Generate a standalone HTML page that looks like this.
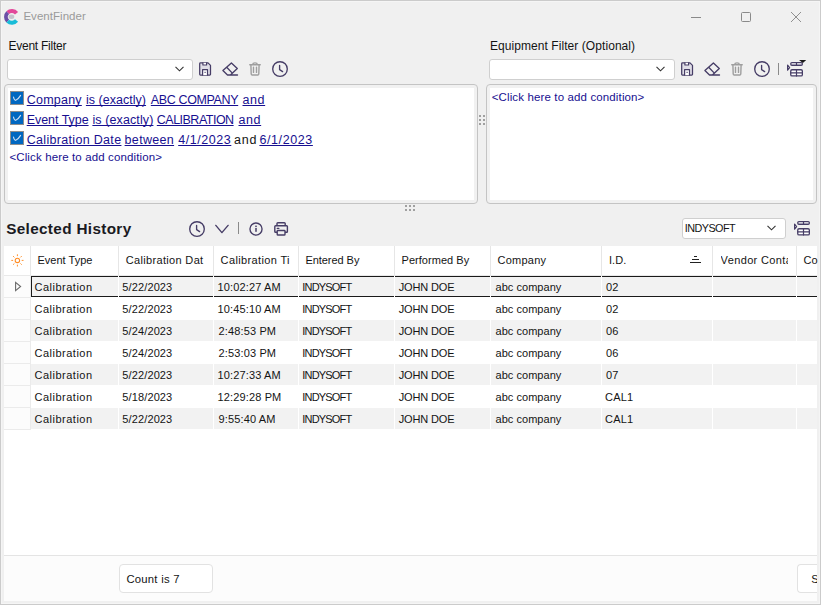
<!DOCTYPE html>
<html><head><meta charset="utf-8">
<style>
*{box-sizing:border-box;margin:0;padding:0}
html,body{width:821px;height:605px;overflow:hidden;background:#f0f0f0;font-family:"Liberation Sans",sans-serif;color:#1e1e1e}
.a{position:absolute}
.tx{position:absolute;white-space:nowrap;line-height:20px;font-family:"Liberation Sans",sans-serif}
.lk{text-decoration:underline;text-decoration-thickness:1px;text-decoration-skip-ink:none}
.win{position:absolute;left:0;top:0;width:821px;height:605px;border:1px solid #cbcbcb;box-shadow:inset 0 0 0 1px #f5f5f5}
.combo{position:absolute;background:#fff;border:1px solid #cfcfcf;border-radius:3px}
.box{position:absolute;border:1px solid #c4c4c4;border-radius:4px;background:#f1f1f1}
.box .in{position:absolute;left:3px;top:3px;right:3px;bottom:3px;background:#fff}
.chk{position:absolute;left:10px;width:14px;height:14px;background:#0067c0;border:1px solid #8d8d8d}
svg{position:absolute;overflow:visible}
.ic{fill:none;stroke:#463d66;stroke-width:1.35;stroke-linecap:round;stroke-linejoin:round}
.icg{fill:none;stroke:#9e9e9e;stroke-width:1.4;stroke-linecap:round;stroke-linejoin:round}
.grid{position:absolute;left:4px;top:246px;width:813px;height:309px;background:#fff;overflow:hidden}
.g{position:absolute}
</style></head>
<body>
<div class="win"></div>

<!-- logo -->
<svg style="left:0;top:0" width="30" height="30" viewBox="0 0 30 30">
  <path d="M16.55 13.27 A5.9 5.9 0 0 0 7.73 12.73" fill="none" stroke="#e2489a" stroke-width="3.9"/>
  <path d="M7.73 12.73 A5.9 5.9 0 0 0 7.73 21.07" fill="none" stroke="#6b4fa6" stroke-width="3.9"/>
  <path d="M7.73 21.07 A5.9 5.9 0 0 0 16.55 20.53" fill="none" stroke="#19bcd8" stroke-width="3.9"/>
  <ellipse cx="11.4" cy="16.8" rx="2.9" ry="2.2" fill="#c4c4cc"/>
</svg>
<!-- window controls -->
<div class="a" style="left:691px;top:17px;width:10px;height:1px;background:#8a8a8a"></div>
<div class="a" style="left:741px;top:12px;width:10px;height:10px;border:1px solid #8a8a8a;border-radius:1.5px"></div>
<svg style="left:790px;top:11px" width="12" height="12" viewBox="0 0 12 12"><path d="M1 1 L11 11 M11 1 L1 11" stroke="#8a8a8a" stroke-width="0.95"/></svg>

<!-- combos -->
<div class="combo" style="left:7px;top:59px;width:186px;height:21px"></div>
<svg style="left:175px;top:66px" width="9" height="6" viewBox="0 0 9 6"><path d="M0.5 0.8 L4.5 4.8 L8.5 0.8" fill="none" stroke="#333" stroke-width="1.1"/></svg>
<div class="combo" style="left:489px;top:59px;width:186px;height:21px"></div>
<svg style="left:656px;top:66px" width="9" height="6" viewBox="0 0 9 6"><path d="M0.5 0.8 L4.5 4.8 L8.5 0.8" fill="none" stroke="#333" stroke-width="1.1"/></svg>

<!-- toolbar icons: save, eraser, trash, clock (set 1 at x offset 0, set 2 at +482) -->
<svg style="left:198px;top:61px" width="15" height="16" viewBox="0 0 15 16">
<path class="ic" style="fill:#e0dee7;stroke-width:1.25" d="M2.5 1.9 H10 L12.5 4.4 V13.3 Q12.5 14.1 11.7 14.1 H2.5 Q1.7 14.1 1.7 13.3 V2.7 Q1.7 1.9 2.5 1.9 Z"/>
<path class="ic" style="fill:#fff;stroke-width:1.2" d="M4.6 14.1 V8.6 H9.5 V14.1"/>
<path class="ic" style="fill:#fff;stroke-width:1.2" d="M4.9 1.9 V4.0 H8.6 V1.9"/>
<rect x="6.5" y="10.8" width="1.2" height="1.1" fill="#463d66"/>
</svg>
<svg style="left:221px;top:61px" width="19" height="16" viewBox="0 0 19 16">
<path class="ic" d="M1.9 9.6 L10.4 1.9 L16.3 7.4 L9.4 14 H6.5 Z M5.7 6.2 L10.6 11.4 M6.5 14 H16.5"/>
</svg>
<svg style="left:248px;top:61px" width="15" height="16" viewBox="0 0 15 16">
<path class="icg" d="M1.75 3.75 H12.25 M4.6 3.6 Q4.8 1.9 7 1.9 Q9.2 1.9 9.4 3.6 M2.9 3.9 L3.2 13 Q3.3 13.95 4.2 13.95 H9.8 Q10.7 13.95 10.8 13 L11.1 3.9 M5.5 6.3 V11.4 M8.5 6.3 V11.4"/>
</svg>
<svg style="left:270px;top:58.900000000000006px" width="20" height="20" viewBox="0 0 20 20">
<circle class="ic" style="stroke-width:1.35" cx="10" cy="10" r="7.3"/>
<path class="ic" style="stroke-width:1.35" d="M9.6 6.4 V10.6 L12.6 12.6"/>
</svg>
<svg style="left:680px;top:61px" width="15" height="16" viewBox="0 0 15 16">
<path class="ic" style="fill:#e0dee7;stroke-width:1.25" d="M2.5 1.9 H10 L12.5 4.4 V13.3 Q12.5 14.1 11.7 14.1 H2.5 Q1.7 14.1 1.7 13.3 V2.7 Q1.7 1.9 2.5 1.9 Z"/>
<path class="ic" style="fill:#fff;stroke-width:1.2" d="M4.6 14.1 V8.6 H9.5 V14.1"/>
<path class="ic" style="fill:#fff;stroke-width:1.2" d="M4.9 1.9 V4.0 H8.6 V1.9"/>
<rect x="6.5" y="10.8" width="1.2" height="1.1" fill="#463d66"/>
</svg>
<svg style="left:703px;top:61px" width="19" height="16" viewBox="0 0 19 16">
<path class="ic" d="M1.9 9.6 L10.4 1.9 L16.3 7.4 L9.4 14 H6.5 Z M5.7 6.2 L10.6 11.4 M6.5 14 H16.5"/>
</svg>
<svg style="left:730px;top:61px" width="15" height="16" viewBox="0 0 15 16">
<path class="icg" d="M1.75 3.75 H12.25 M4.6 3.6 Q4.8 1.9 7 1.9 Q9.2 1.9 9.4 3.6 M2.9 3.9 L3.2 13 Q3.3 13.95 4.2 13.95 H9.8 Q10.7 13.95 10.8 13 L11.1 3.9 M5.5 6.3 V11.4 M8.5 6.3 V11.4"/>
</svg>
<svg style="left:752px;top:58.900000000000006px" width="20" height="20" viewBox="0 0 20 20">
<circle class="ic" style="stroke-width:1.35" cx="10" cy="10" r="7.3"/>
<path class="ic" style="stroke-width:1.35" d="M9.6 6.4 V10.6 L12.6 12.6"/>
</svg>
<div class="a" style="left:778px;top:63px;width:1px;height:12px;background:#8a8a8a"></div>
<svg style="left:786px;top:59px" width="22" height="19" viewBox="0 0 22 19">
<path class="ic" style="stroke-width:1.2" d="M1.6 6 L3.6 8.6 L1.6 11.2 Z"/>
<rect class="ic" style="stroke-width:1.3;fill:#fff" x="4.75" y="3.65" width="11.6" height="2.6" rx="1.2"/>
<path class="ic" style="stroke-width:1.2" d="M10.5 3.65 V6.25"/>
<rect class="ic" style="stroke-width:1.3;fill:#fff" x="4.75" y="10.75" width="11.6" height="6.2" rx="1.3"/>
<path class="ic" style="stroke-width:1.2" d="M10.5 10.75 V16.95 M4.75 13.85 H16.35"/>
<path d="M13 1 H20.2 L16.9 4 Z" fill="#1a1a1a"/>
</svg>

<div class="box" style="left:4px;top:84px;width:474px;height:120px"><div class="in"></div></div>
<div class="box" style="left:486px;top:84px;width:331px;height:120px"><div class="in"></div></div>

<div class="chk" style="top:91px"></div>
<div class="chk" style="top:111px"></div>
<div class="chk" style="top:131px"></div>
<svg style="left:10px;top:91px" width="14" height="54" viewBox="0 0 14 54">
  <path d="M3.5 6 Q4.3 9.6 5.8 9.3 Q8.2 8.4 10.6 4.4 M3.5 26 Q4.3 29.6 5.8 29.3 Q8.2 28.4 10.6 24.4 M3.5 46 Q4.3 49.6 5.8 49.3 Q8.2 48.4 10.6 44.4" fill="none" stroke="#c8dcf2" stroke-width="1.15" stroke-linecap="round"/>
</svg>

<!-- vertical splitter dots -->
<div class="a" style="left:479px;top:115px;width:2px;height:2px;background:#a0a0a0;box-shadow:4px 0 #a0a0a0,0 4px #a0a0a0,4px 4px #a0a0a0,0 8px #a0a0a0,4px 8px #a0a0a0"></div>
<!-- horizontal splitter dots -->
<div class="a" style="left:405px;top:205px;width:2px;height:2px;background:#a0a0a0;box-shadow:4px 0 #a0a0a0,8px 0 #a0a0a0,0 4px #a0a0a0,4px 4px #a0a0a0,8px 4px #a0a0a0"></div>

<svg style="left:187px;top:218.9px" width="20" height="20" viewBox="0 0 20 20">
<circle class="ic" style="stroke-width:1.35" cx="10" cy="10" r="7.3"/>
<path class="ic" style="stroke-width:1.35" d="M9.6 6.4 V10.6 L12.6 12.6"/>
</svg>
<svg style="left:214px;top:224px" width="16" height="10" viewBox="0 0 16 10"><path class="ic" style="stroke-width:1.4" d="M1.8 1.4 L7.9 8.6 L14.1 1.4"/></svg>
<div class="a" style="left:238px;top:222px;width:1px;height:12px;background:#8a8a8a"></div>
<svg style="left:246px;top:219px" width="20" height="20" viewBox="0 0 20 20"><circle class="ic" style="stroke-width:1.35" cx="10" cy="10" r="6.05"/><rect x="9.25" y="6.6" width="1.5" height="1.4" fill="#463d66"/><rect x="9.25" y="8.9" width="1.5" height="3.9" fill="#463d66"/></svg>
<svg style="left:273px;top:221px" width="16" height="16" viewBox="0 0 16 16"><path class="ic" style="stroke-width:1.4" d="M4 4.7 V2.6 Q4 1.7 4.9 1.7 H11.3 Q12.2 1.7 12.2 2.6 V4.7 M4 11.3 H2.6 Q1.8 11.3 1.8 10.5 V5.6 Q1.8 4.8 2.6 4.8 H13.6 Q14.4 4.8 14.4 5.6 V10.5 Q14.4 11.3 13.6 11.3 H12.2 M4.9 9.5 H11.3 Q12 9.5 12 10.2 V13.2 Q12 14 11.2 14 H5 Q4.2 14 4.2 13.2 V10.2 Q4.2 9.5 4.9 9.5 Z M4.3 7.4 H5.8"/></svg>
<svg style="left:793px;top:218px" width="22" height="19" viewBox="0 0 22 19">
<path class="ic" style="stroke-width:1.2" d="M1.6 6 L3.6 8.6 L1.6 11.2 Z"/>
<rect class="ic" style="stroke-width:1.3;fill:#fff" x="4.75" y="3.65" width="11.6" height="2.6" rx="1.2"/>
<path class="ic" style="stroke-width:1.2" d="M10.5 3.65 V6.25"/>
<rect class="ic" style="stroke-width:1.3;fill:#fff" x="4.75" y="10.75" width="11.6" height="6.2" rx="1.3"/>
<path class="ic" style="stroke-width:1.2" d="M10.5 10.75 V16.95 M4.75 13.85 H16.35"/>

</svg>

<div class="combo" style="left:682px;top:218px;width:104px;height:21px"></div>
<svg style="left:767px;top:225px" width="9" height="6" viewBox="0 0 9 6"><path d="M0.5 0.8 L4.5 4.8 L8.5 0.8" fill="none" stroke="#333" stroke-width="1.1"/></svg>

<!-- grid -->
<div class="a" style="left:4px;top:246px;width:813px;height:309px;background:#fff"></div>
<div class="a" style="left:30px;top:246px;width:1px;height:29px;background:#e6e6e6"></div>
<div class="a" style="left:118px;top:246px;width:1px;height:29px;background:#e6e6e6"></div>
<div class="a" style="left:213px;top:246px;width:1px;height:29px;background:#e6e6e6"></div>
<div class="a" style="left:298px;top:246px;width:1px;height:29px;background:#e6e6e6"></div>
<div class="a" style="left:394px;top:246px;width:1px;height:29px;background:#e6e6e6"></div>
<div class="a" style="left:490px;top:246px;width:1px;height:29px;background:#e6e6e6"></div>
<div class="a" style="left:601px;top:246px;width:1px;height:29px;background:#e6e6e6"></div>
<div class="a" style="left:712px;top:246px;width:1px;height:29px;background:#e6e6e6"></div>
<div class="a" style="left:796px;top:246px;width:1px;height:29px;background:#e6e6e6"></div>
<div class="a" style="left:4px;top:275px;width:813px;height:1px;background:#e9e9e9"></div>
<div class="a" style="left:4px;top:276px;width:26px;height:21px;background:#fcfcfc"></div>
<div class="a" style="left:4px;top:297px;width:26px;height:1px;background:#ebebeb"></div>
<div class="a" style="left:4px;top:298px;width:26px;height:21px;background:#fcfcfc"></div>
<div class="a" style="left:4px;top:319px;width:26px;height:1px;background:#ebebeb"></div>
<div class="a" style="left:4px;top:320px;width:26px;height:21px;background:#fcfcfc"></div>
<div class="a" style="left:4px;top:341px;width:26px;height:1px;background:#ebebeb"></div>
<div class="a" style="left:4px;top:342px;width:26px;height:21px;background:#fcfcfc"></div>
<div class="a" style="left:4px;top:363px;width:26px;height:1px;background:#ebebeb"></div>
<div class="a" style="left:4px;top:364px;width:26px;height:21px;background:#fcfcfc"></div>
<div class="a" style="left:4px;top:385px;width:26px;height:1px;background:#ebebeb"></div>
<div class="a" style="left:4px;top:386px;width:26px;height:21px;background:#fcfcfc"></div>
<div class="a" style="left:4px;top:407px;width:26px;height:1px;background:#ebebeb"></div>
<div class="a" style="left:4px;top:408px;width:26px;height:21px;background:#fcfcfc"></div>
<div class="a" style="left:4px;top:429px;width:26px;height:1px;background:#ebebeb"></div>
<div class="a" style="left:30px;top:276px;width:1px;height:154px;background:#ebebeb"></div>
<div class="a" style="left:31px;top:276px;width:87px;height:21px;background:#f2f2f2"></div>
<div class="a" style="left:119px;top:276px;width:94px;height:21px;background:#f2f2f2"></div>
<div class="a" style="left:214px;top:276px;width:84px;height:21px;background:#f2f2f2"></div>
<div class="a" style="left:299px;top:276px;width:95px;height:21px;background:#f2f2f2"></div>
<div class="a" style="left:395px;top:276px;width:95px;height:21px;background:#f2f2f2"></div>
<div class="a" style="left:491px;top:276px;width:110px;height:21px;background:#f2f2f2"></div>
<div class="a" style="left:602px;top:276px;width:110px;height:21px;background:#f2f2f2"></div>
<div class="a" style="left:713px;top:276px;width:83px;height:21px;background:#f2f2f2"></div>
<div class="a" style="left:797px;top:276px;width:20px;height:21px;background:#f2f2f2"></div>
<div class="a" style="left:31px;top:320px;width:87px;height:21px;background:#f2f2f2"></div>
<div class="a" style="left:119px;top:320px;width:94px;height:21px;background:#f2f2f2"></div>
<div class="a" style="left:214px;top:320px;width:84px;height:21px;background:#f2f2f2"></div>
<div class="a" style="left:299px;top:320px;width:95px;height:21px;background:#f2f2f2"></div>
<div class="a" style="left:395px;top:320px;width:95px;height:21px;background:#f2f2f2"></div>
<div class="a" style="left:491px;top:320px;width:110px;height:21px;background:#f2f2f2"></div>
<div class="a" style="left:602px;top:320px;width:110px;height:21px;background:#f2f2f2"></div>
<div class="a" style="left:713px;top:320px;width:83px;height:21px;background:#f2f2f2"></div>
<div class="a" style="left:797px;top:320px;width:20px;height:21px;background:#f2f2f2"></div>
<div class="a" style="left:31px;top:364px;width:87px;height:21px;background:#f2f2f2"></div>
<div class="a" style="left:119px;top:364px;width:94px;height:21px;background:#f2f2f2"></div>
<div class="a" style="left:214px;top:364px;width:84px;height:21px;background:#f2f2f2"></div>
<div class="a" style="left:299px;top:364px;width:95px;height:21px;background:#f2f2f2"></div>
<div class="a" style="left:395px;top:364px;width:95px;height:21px;background:#f2f2f2"></div>
<div class="a" style="left:491px;top:364px;width:110px;height:21px;background:#f2f2f2"></div>
<div class="a" style="left:602px;top:364px;width:110px;height:21px;background:#f2f2f2"></div>
<div class="a" style="left:713px;top:364px;width:83px;height:21px;background:#f2f2f2"></div>
<div class="a" style="left:797px;top:364px;width:20px;height:21px;background:#f2f2f2"></div>
<div class="a" style="left:31px;top:408px;width:87px;height:21px;background:#f2f2f2"></div>
<div class="a" style="left:119px;top:408px;width:94px;height:21px;background:#f2f2f2"></div>
<div class="a" style="left:214px;top:408px;width:84px;height:21px;background:#f2f2f2"></div>
<div class="a" style="left:299px;top:408px;width:95px;height:21px;background:#f2f2f2"></div>
<div class="a" style="left:395px;top:408px;width:95px;height:21px;background:#f2f2f2"></div>
<div class="a" style="left:491px;top:408px;width:110px;height:21px;background:#f2f2f2"></div>
<div class="a" style="left:602px;top:408px;width:110px;height:21px;background:#f2f2f2"></div>
<div class="a" style="left:713px;top:408px;width:83px;height:21px;background:#f2f2f2"></div>
<div class="a" style="left:797px;top:408px;width:20px;height:21px;background:#f2f2f2"></div>
<div class="a" style="left:31px;top:276px;width:87px;height:1px;background:#1a1a1a"></div>
<div class="a" style="left:31px;top:296px;width:87px;height:1px;background:#1a1a1a"></div>
<div class="a" style="left:119px;top:276px;width:94px;height:1px;background:#1a1a1a"></div>
<div class="a" style="left:119px;top:296px;width:94px;height:1px;background:#1a1a1a"></div>
<div class="a" style="left:214px;top:276px;width:84px;height:1px;background:#1a1a1a"></div>
<div class="a" style="left:214px;top:296px;width:84px;height:1px;background:#1a1a1a"></div>
<div class="a" style="left:299px;top:276px;width:95px;height:1px;background:#1a1a1a"></div>
<div class="a" style="left:299px;top:296px;width:95px;height:1px;background:#1a1a1a"></div>
<div class="a" style="left:395px;top:276px;width:95px;height:1px;background:#1a1a1a"></div>
<div class="a" style="left:395px;top:296px;width:95px;height:1px;background:#1a1a1a"></div>
<div class="a" style="left:491px;top:276px;width:110px;height:1px;background:#1a1a1a"></div>
<div class="a" style="left:491px;top:296px;width:110px;height:1px;background:#1a1a1a"></div>
<div class="a" style="left:602px;top:276px;width:110px;height:1px;background:#1a1a1a"></div>
<div class="a" style="left:602px;top:296px;width:110px;height:1px;background:#1a1a1a"></div>
<div class="a" style="left:713px;top:276px;width:83px;height:1px;background:#1a1a1a"></div>
<div class="a" style="left:713px;top:296px;width:83px;height:1px;background:#1a1a1a"></div>
<div class="a" style="left:797px;top:276px;width:20px;height:1px;background:#1a1a1a"></div>
<div class="a" style="left:797px;top:296px;width:20px;height:1px;background:#1a1a1a"></div>
<div class="a" style="left:31px;top:276px;width:1px;height:21px;background:#1a1a1a"></div>
<div class="a" style="left:694px;top:256px;width:3px;height:1px;background:#222"></div>
<div class="a" style="left:692px;top:259px;width:7px;height:1px;background:#222"></div>
<div class="a" style="left:690px;top:262px;width:11px;height:1px;background:#222"></div>
<svg style="left:7px;top:250px" width="22" height="22" viewBox="0 0 22 22"><circle cx="10.399999999999999" cy="10.399999999999977" r="2.2" fill="none" stroke="#ff8c24" stroke-width="1.05"/><path d="M14.70 10.40 L16.50 10.40 M13.44 13.44 L14.71 14.71 M10.40 14.70 L10.40 16.50 M7.36 13.44 L6.09 14.71 M6.10 10.40 L4.30 10.40 M7.36 7.36 L6.09 6.09 M10.40 6.10 L10.40 4.30 M13.44 7.36 L14.71 6.09" stroke="#ff8c24" stroke-width="0.95" stroke-linecap="butt"/></svg>
<svg style="left:13px;top:280px" width="12" height="14" viewBox="0 0 12 14"><path d="M2.6 2.4 L7.6 6.5 L2.6 10.6 Z" fill="none" stroke="#6a6a6a" stroke-width="1.1" stroke-linejoin="miter"/></svg>

<!-- status -->
<div class="a" style="left:4px;top:555px;width:813px;height:1px;background:#e4e4e4"></div>
<div class="a" style="left:4px;top:556px;width:813px;height:45px;background:#fcfcfc"></div>
<div class="a" style="left:119px;top:564px;width:94px;height:29px;background:#fff;border:1px solid #e2e2e2;border-radius:4px"></div>
<div class="a" style="left:797px;top:564px;width:20px;height:29px;background:#fff;border:1px solid #e2e2e2;border-right:none;border-radius:4px 0 0 4px"></div>

<div class="tx" style="left:23.4px;top:5.8px;font-size:11.5px;letter-spacing:0.04px;color:#9a9a9a">EventFinder</div>
<div class="tx" style="left:8.5px;top:36px;font-size:12px;letter-spacing:-0.255px;color:#141414">Event Filter</div>
<div class="tx" style="left:490px;top:36.1px;font-size:12px;letter-spacing:0.065px;color:#141414">Equipment Filter (Optional)</div>
<div class="tx lk" style="left:26.7px;top:90px;font-size:12.5px;letter-spacing:0.233px;color:#170f90">Company</div>
<div class="tx lk" style="left:85.9px;top:90px;font-size:12.5px;letter-spacing:0.036px;color:#170f90">is (exactly)</div>
<div class="tx lk" style="left:150.8px;top:90px;font-size:12.5px;letter-spacing:-0.37px;color:#170f90">ABC COMPANY</div>
<div class="tx lk" style="left:242.5px;top:90px;font-size:12.5px;letter-spacing:0.6px;color:#170f90">and</div>
<div class="tx lk" style="left:26.7px;top:110px;font-size:12.5px;letter-spacing:-0.044px;color:#170f90">Event Type</div>
<div class="tx lk" style="left:92.4px;top:110px;font-size:12.5px;letter-spacing:0.109px;color:#170f90">is (exactly)</div>
<div class="tx lk" style="left:156.8px;top:110px;font-size:12.5px;letter-spacing:-0.51px;color:#170f90">CALIBRATION</div>
<div class="tx lk" style="left:238.5px;top:110px;font-size:12.5px;letter-spacing:0.6px;color:#170f90">and</div>
<div class="tx lk" style="left:26.7px;top:130px;font-size:12.5px;letter-spacing:0.32px;color:#170f90">Calibration Date</div>
<div class="tx lk" style="left:124.6px;top:130px;font-size:12.5px;letter-spacing:0.317px;color:#170f90">between</div>
<div class="tx lk" style="left:178.2px;top:130px;font-size:12.5px;letter-spacing:0.557px;color:#170f90">4/1/2023</div>
<div class="tx" style="left:234.1px;top:130px;font-size:12.5px;letter-spacing:0.8px;color:#141414">and</div>
<div class="tx lk" style="left:259.4px;top:130px;font-size:12.5px;letter-spacing:0.6px;color:#170f90">6/1/2023</div>
<div class="tx" style="left:9.4px;top:146.6px;font-size:11.5px;letter-spacing:0.132px;color:#170f90">&lt;Click here to add condition&gt;</div>
<div class="tx" style="left:491.7px;top:87.3px;font-size:11.5px;letter-spacing:0.132px;color:#170f90">&lt;Click here to add condition&gt;</div>
<div class="tx" style="left:6.2px;top:219.1px;font-size:15.3px;letter-spacing:0.34px;color:#1a1a22;font-weight:bold">Selected History</div>
<div class="tx" style="left:684.7px;top:217.6px;font-size:10.8px;letter-spacing:-0.514px;color:#141414">INDYSOFT</div>
<div class="tx" style="left:37.5px;top:250px;font-size:11px;letter-spacing:0.011px;color:#141414">Event Type</div>
<div class="tx" style="left:125.7px;top:250px;font-size:11px;letter-spacing:0.336px;color:#141414">Calibration Dat</div>
<div class="tx" style="left:220.6px;top:250px;font-size:11px;letter-spacing:0.362px;color:#141414">Calibration Ti</div>
<div class="tx" style="left:305.4px;top:250px;font-size:11px;letter-spacing:-0.044px;color:#141414">Entered By</div>
<div class="tx" style="left:401.5px;top:250px;font-size:11px;letter-spacing:0.045px;color:#141414">Performed By</div>
<div class="tx" style="left:497.5px;top:250px;font-size:11px;letter-spacing:0.25px;color:#141414">Company</div>
<div class="tx" style="left:608.9px;top:250px;font-size:11px;letter-spacing:0.1px;color:#141414">I.D.</div>
<div class="tx" style="left:720.6px;top:250px;font-size:11px;letter-spacing:0.364px;color:#141414;width:67.5px;overflow:hidden">Vendor Conta</div>
<div class="tx" style="left:803.6px;top:250px;font-size:11px;letter-spacing:0px;color:#141414">Co</div>
<div class="tx" style="left:34.5px;top:277px;font-size:11px;letter-spacing:0.5px;color:#141414">Calibration</div>
<div class="tx" style="left:122.3px;top:277px;font-size:11px;letter-spacing:0.125px;color:#141414">5/22/2023</div>
<div class="tx" style="left:217.5px;top:277px;font-size:11px;letter-spacing:0.14px;color:#141414">10:02:27 AM</div>
<div class="tx" style="left:302.3px;top:277px;font-size:11px;letter-spacing:-0.829px;color:#141414">INDYSOFT</div>
<div class="tx" style="left:398.7px;top:277px;font-size:11px;letter-spacing:-0.143px;color:#141414">JOHN DOE</div>
<div class="tx" style="left:495.5px;top:277px;font-size:11px;letter-spacing:0.04px;color:#141414">abc company</div>
<div class="tx" style="left:606px;top:277px;font-size:11px;letter-spacing:0.2px;color:#141414">02</div>
<div class="tx" style="left:34.5px;top:299px;font-size:11px;letter-spacing:0.5px;color:#141414">Calibration</div>
<div class="tx" style="left:122.3px;top:299px;font-size:11px;letter-spacing:0.125px;color:#141414">5/22/2023</div>
<div class="tx" style="left:217.5px;top:299px;font-size:11px;letter-spacing:0.14px;color:#141414">10:45:10 AM</div>
<div class="tx" style="left:302.3px;top:299px;font-size:11px;letter-spacing:-0.829px;color:#141414">INDYSOFT</div>
<div class="tx" style="left:398.7px;top:299px;font-size:11px;letter-spacing:-0.143px;color:#141414">JOHN DOE</div>
<div class="tx" style="left:495.5px;top:299px;font-size:11px;letter-spacing:0.04px;color:#141414">abc company</div>
<div class="tx" style="left:606px;top:299px;font-size:11px;letter-spacing:0.2px;color:#141414">02</div>
<div class="tx" style="left:34.5px;top:321px;font-size:11px;letter-spacing:0.5px;color:#141414">Calibration</div>
<div class="tx" style="left:122.3px;top:321px;font-size:11px;letter-spacing:0.125px;color:#141414">5/24/2023</div>
<div class="tx" style="left:218.5px;top:321px;font-size:11px;letter-spacing:0.14px;color:#141414">2:48:53 PM</div>
<div class="tx" style="left:302.3px;top:321px;font-size:11px;letter-spacing:-0.829px;color:#141414">INDYSOFT</div>
<div class="tx" style="left:398.7px;top:321px;font-size:11px;letter-spacing:-0.143px;color:#141414">JOHN DOE</div>
<div class="tx" style="left:495.5px;top:321px;font-size:11px;letter-spacing:0.04px;color:#141414">abc company</div>
<div class="tx" style="left:606px;top:321px;font-size:11px;letter-spacing:0.2px;color:#141414">06</div>
<div class="tx" style="left:34.5px;top:343px;font-size:11px;letter-spacing:0.5px;color:#141414">Calibration</div>
<div class="tx" style="left:122.3px;top:343px;font-size:11px;letter-spacing:0.125px;color:#141414">5/24/2023</div>
<div class="tx" style="left:218.5px;top:343px;font-size:11px;letter-spacing:0.14px;color:#141414">2:53:03 PM</div>
<div class="tx" style="left:302.3px;top:343px;font-size:11px;letter-spacing:-0.829px;color:#141414">INDYSOFT</div>
<div class="tx" style="left:398.7px;top:343px;font-size:11px;letter-spacing:-0.143px;color:#141414">JOHN DOE</div>
<div class="tx" style="left:495.5px;top:343px;font-size:11px;letter-spacing:0.04px;color:#141414">abc company</div>
<div class="tx" style="left:606px;top:343px;font-size:11px;letter-spacing:0.2px;color:#141414">06</div>
<div class="tx" style="left:34.5px;top:365px;font-size:11px;letter-spacing:0.5px;color:#141414">Calibration</div>
<div class="tx" style="left:122.3px;top:365px;font-size:11px;letter-spacing:0.125px;color:#141414">5/22/2023</div>
<div class="tx" style="left:217.5px;top:365px;font-size:11px;letter-spacing:0.14px;color:#141414">10:27:33 AM</div>
<div class="tx" style="left:302.3px;top:365px;font-size:11px;letter-spacing:-0.829px;color:#141414">INDYSOFT</div>
<div class="tx" style="left:398.7px;top:365px;font-size:11px;letter-spacing:-0.143px;color:#141414">JOHN DOE</div>
<div class="tx" style="left:495.5px;top:365px;font-size:11px;letter-spacing:0.04px;color:#141414">abc company</div>
<div class="tx" style="left:606px;top:365px;font-size:11px;letter-spacing:0.2px;color:#141414">07</div>
<div class="tx" style="left:34.5px;top:387px;font-size:11px;letter-spacing:0.5px;color:#141414">Calibration</div>
<div class="tx" style="left:122.3px;top:387px;font-size:11px;letter-spacing:0.125px;color:#141414">5/18/2023</div>
<div class="tx" style="left:217.5px;top:387px;font-size:11px;letter-spacing:0.14px;color:#141414">12:29:28 PM</div>
<div class="tx" style="left:302.3px;top:387px;font-size:11px;letter-spacing:-0.829px;color:#141414">INDYSOFT</div>
<div class="tx" style="left:398.7px;top:387px;font-size:11px;letter-spacing:-0.143px;color:#141414">JOHN DOE</div>
<div class="tx" style="left:495.5px;top:387px;font-size:11px;letter-spacing:0.04px;color:#141414">abc company</div>
<div class="tx" style="left:605px;top:387px;font-size:11px;letter-spacing:0.2px;color:#141414">CAL1</div>
<div class="tx" style="left:34.5px;top:409px;font-size:11px;letter-spacing:0.5px;color:#141414">Calibration</div>
<div class="tx" style="left:122.3px;top:409px;font-size:11px;letter-spacing:0.125px;color:#141414">5/22/2023</div>
<div class="tx" style="left:218.5px;top:409px;font-size:11px;letter-spacing:0.14px;color:#141414">9:55:40 AM</div>
<div class="tx" style="left:302.3px;top:409px;font-size:11px;letter-spacing:-0.829px;color:#141414">INDYSOFT</div>
<div class="tx" style="left:398.7px;top:409px;font-size:11px;letter-spacing:-0.143px;color:#141414">JOHN DOE</div>
<div class="tx" style="left:495.5px;top:409px;font-size:11px;letter-spacing:0.04px;color:#141414">abc company</div>
<div class="tx" style="left:605px;top:409px;font-size:11px;letter-spacing:0.2px;color:#141414">CAL1</div>
<div class="tx" style="left:126.4px;top:569px;font-size:11.3px;letter-spacing:0.244px;color:#141414">Count is 7</div>
<div class="tx" style="left:811.3px;top:569px;font-size:11.3px;letter-spacing:0px;color:#141414;width:5.6px;overflow:hidden">S</div>
</body></html>
